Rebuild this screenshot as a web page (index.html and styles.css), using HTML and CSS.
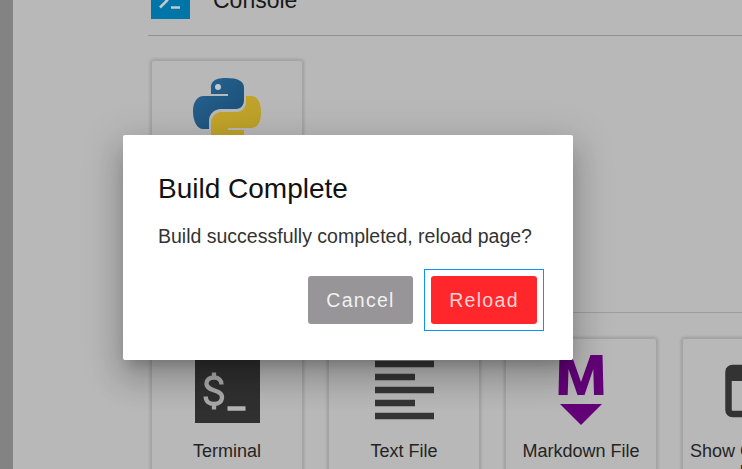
FILE: index.html
```
<!DOCTYPE html>
<html lang="en">
<head>
<meta charset="utf-8">
<title>Launcher</title>
<link rel="stylesheet" href="styles.css">
</head>
<body>
<main class="launcher">
  <header class="section-title">
    <svg class="console-icon" viewBox="0 0 39 39"><rect width="39" height="39" fill="#0075a8"/><path d="M9 14l7 6.500-7 7" stroke="#c5c8ca" stroke-width="2.500" fill="none"/><path d="M20 27.500h9" stroke="#c5c8ca" stroke-width="2.500"/></svg>
    <h2>Console</h2>
  </header>
  <section class="cards consoles">
    <article class="card">
      <svg class="icon" viewBox="0 0 76 76">
        <defs>
          <linearGradient id="blue" x1="0" y1="0" x2="1" y2="1"><stop stop-color="#2a6593"/><stop offset="1" stop-color="#174c75"/></linearGradient>
          <linearGradient id="gold" x1="0" y1="0" x2="1" y2="1"><stop stop-color="#c7a62d"/><stop offset="1" stop-color="#b99f27"/></linearGradient>
        </defs>
        <path fill="url(#blue)" d="M37 3c-13 0-15 5-15 10v6h17v2H15C8 21 4 27 4 36.500S8 54 14 54h6v-8c0-7 5-12 12-12h15c5 0 8-4 8-9V13c0-7-6-10-18-10z"/>
        <circle cx="29" cy="12" r="3" fill="#c2c8cd"/>
        <path fill="url(#gold)" d="M57 21v6c0 6-4 10-10 10H32c-5 0-10 5-10 11v12c0 7 7 10 17 10s16-3 16-10v-5H39v-2h23c7 0 10-6 10-16s-4-16-10-16z"/>
      </svg>
    </article>
  </section>
  <section class="cards others">
    <article class="card">
      <svg class="icon" viewBox="0 0 76 76"><rect x="6" y="2" width="65" height="67" fill="#303030"/><path d="M32.500 30.500c0-4.500-3-7-7.500-7-5 0-7.500 2.500-7.500 6 0 8.500 15.500 5.500 15.500 13.500 0 4.500-3 7-8 7s-8.300-2.700-8.300-7.500M25 18.500v5M25 50v5.500" stroke="#a9a9a9" stroke-width="4.300" fill="none"/><path d="M38.500 54.500h18" stroke="#b5b5b5" stroke-width="4.500"/></svg>
      <p>Terminal</p>
    </article>
    <article class="card">
      <svg class="icon" viewBox="0 0 76 76"><path d="M9 10h59M9 23h40M9 36h59M9 49h40M9 62h59" stroke="#353535" stroke-width="6.500"/></svg>
      <p>Text File</p>
    </article>
    <article class="card">
      <svg class="icon" viewBox="0 0 76 76"><path fill="#630078" d="M15.500 41l1-40h12l9.500 27L47.500 1h12l1 40h-9.500l-.7-26L41.500 41h-7L25.500 15l-.8 26z"/><path fill="#630078" d="M17 50h42L38 71z"/></svg>
      <p>Markdown File</p>
    </article>
    <article class="card">
      <svg class="icon" viewBox="0 0 76 76"><rect x="8.500" y="14" width="59" height="46" rx="4" fill="none" stroke="#333" stroke-width="6.500"/><path d="M6 14h64v13H6z" fill="#333"/></svg>
      <p>Show Contextual Help</p>
    </article>
  </section>
</main>
<div class="overlay">
  <div class="dialog" role="dialog" aria-labelledby="dialog-title">
    <h1 id="dialog-title">Build Complete</h1>
    <p>Build successfully completed, reload page?</p>
    <div class="actions">
      <button class="cancel">Cancel</button>
      <div class="focus-ring"><button class="reload">Reload</button></div>
    </div>
  </div>
</div>
</body>
</html>
```
FILE: styles.css
```
* { box-sizing: border-box; }

body {
  margin: 0;
  width: 742px;
  height: 469px;
  overflow: hidden;
  background: #b8b8b8;
  font-family: "Liberation Sans", Arial, sans-serif;
}

h1, h2, p { margin: 0; font-weight: 400; }

.launcher {
  height: 469px;
  overflow: hidden;
  border-left: 13px solid #838383;
  padding-left: 135px;
}

.section-title {
  display: flex;
  align-items: flex-start;
  gap: 23px;
  height: 36px;
  padding-left: 3px;
  border-bottom: 1px solid #929292;
}

.console-icon { width: 39px; height: 39px; margin-top: -20px; }

.section-title h2 {
  margin-top: -14px;
  font-size: 23px;
  line-height: 28px;
  color: #191919;
}

.cards { display: flex; gap: 25px; padding-left: 3px; }

.consoles { height: 277px; padding-top: 24px; border-bottom: 1px solid #9d9d9d; }

.others { padding-top: 25px; }

.card {
  flex: 0 0 152px;
  height: 152px;
  border: 1px solid #a4a4a4;
  border-radius: 3px;
  box-shadow: 0 0 3px 1px rgba(0, 0, 0, .15);
  padding-top: 14px;
  text-align: center;
}

.icon { display: block; width: 76px; height: 76px; margin: 0 auto; }

.others .icon { margin-top: 1px; }

.card p { margin-top: 11px; font-size: 18px; line-height: 21px; color: #242424; }

.overlay {
  position: absolute;
  inset: 0;
  display: flex;
  align-items: flex-start;
  padding: 135px 0 0 122.500px;
  overflow: hidden;
}

.dialog {
  width: 450px;
  height: 225px;
  padding: 36px 28.500px 28px 35.500px;
  border-radius: 2px;
  background: #fff;
  box-shadow: 0 10px 13px -6px rgba(0, 0, 0, .2), 0 20px 31px 3px rgba(0, 0, 0, .14), 0 8px 38px 7px rgba(0, 0, 0, .12);
}

.dialog h1 { font-size: 28px; line-height: 36px; color: #111; }

.dialog p { margin-top: 17px; font-size: 19.500px; line-height: 24px; color: #333; white-space: nowrap; }

.actions { display: flex; justify-content: flex-end; align-items: center; gap: 11px; margin-top: 21px; }

button {
  display: block;
  width: 105px;
  height: 48px;
  padding: 0 0 1px;
  border: 0;
  border-radius: 3px;
  font: 19.500px/46px "Liberation Sans", Arial, sans-serif;
  letter-spacing: 1.300px;
  color: #f1f1f1;
}

.cancel { background: #979597; }

.focus-ring { padding: 6px; border: 1px solid #0b94f0; }

.reload { width: 106px; background: #ff272b; color: #ffd4d5; }
```
